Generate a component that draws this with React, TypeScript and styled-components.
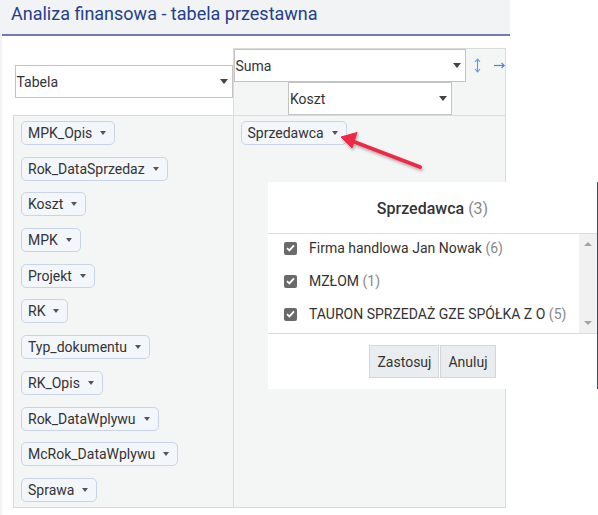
import styled, { createGlobalStyle } from "styled-components";

const GlobalStyle = createGlobalStyle`
  html, body {
    margin: 0;
    padding: 0;
    background: #ffffff;
  }
  body {
    font-family: Roboto, "Liberation Sans", Arial, sans-serif;
    color: #333;
  }
`;

const StyledPage = styled.div`
  position: relative;
  width: 598px;
  height: 515px;
  overflow: hidden;
`;

const StyledWrapper = styled.div`
  width: 510px;
  height: 515px;
  background-color: #f1f3f4;
  display: flex;
  flex-direction: column;
`;

const StyledHeader = styled.header`
  height: 34px;
  padding-left: 11px;
  font-size: 18px;
  line-height: 28px;
  color: #24408a;
`;

const StyledPanel = styled.main`
  flex: 1;
  margin-left: 2px;
  border-top: 2px solid #6c7db4;
  background: #ffffff;
  padding: 12px 0 0 11px;
`;

const StyledTable = styled.table`
  border-collapse: collapse;
  border-spacing: 0;
`;

const StyledRendererCell = styled.td`
  width: 218px;
  padding: 0 0 0 1px;
  vertical-align: middle;
`;

const StyledAxisCell = styled.td<{ $top?: boolean }>`
  border: 1px solid #d9dcdc;
  background: #f4f5f5;
  padding: ${(p) => (p.$top ? "0" : "5px 7px")};
  vertical-align: top;
  text-align: ${(p) => (p.$top ? "center" : "left")};
`;

const StyledSelect = styled.div<{ $width: number }>`
  box-sizing: border-box;
  width: ${(p) => p.$width}px;
  height: 33px;
  border: 1px solid #c3c3c3;
  background: #ffffff;
  display: flex;
  align-items: center;
  justify-content: space-between;
  padding: 0 4px 0 1px;
  font-size: 14px;
  color: #333;
  text-align: left;
`;

const StyledSelectArrow = styled.span`
  width: 0;
  height: 0;
  border-left: 4px solid transparent;
  border-right: 4px solid transparent;
  border-top: 5px solid #444;
`;

const StyledAggRow = styled.div`
  display: flex;
  align-items: center;
`;

const StyledIcon = styled.svg<{ $ml: number }>`
  margin-left: ${(p) => p.$ml}px;
  flex-shrink: 0;
`;

const StyledCenterRow = styled.div`
  display: flex;
  justify-content: center;
  padding-left: 2px;
`;

const StyledAttrList = styled.div`
  display: flex;
  flex-direction: column;
  align-items: flex-start;
  gap: 11.7px;
`;

const StyledPill = styled.div`
  box-sizing: border-box;
  display: inline-flex;
  align-items: center;
  height: 24px;
  padding: 0 8px 0 6px;
  border: 1px solid #c9d5e6;
  border-radius: 5px;
  background: #f3f6fa;
  font-size: 14px;
  color: #333;
  white-space: nowrap;
`;

const StyledCaret = styled.span`
  margin-left: 8px;
  width: 0;
  height: 0;
  border-left: 3px solid transparent;
  border-right: 3px solid transparent;
  border-top: 4px solid #555;
`;

const StyledArrow = styled.svg`
  position: absolute;
  left: 330px;
  top: 120px;
  overflow: visible;
`;

const StyledPopup = styled.div`
  position: absolute;
  left: 268px;
  top: 182px;
  box-sizing: border-box;
  width: 330px;
  height: 207px;
  background: #ffffff;
  border-right: 1px solid #3e4a66;
  display: flex;
  flex-direction: column;
`;

const StyledPopupTitle = styled.div`
  height: 51px;
  box-sizing: border-box;
  padding-top: 15px;
  line-height: 24px;
  text-align: center;
  font-size: 16px;
  font-weight: 500;
  color: #333;
`;

const StyledCount = styled.span`
  font-weight: 400;
  color: #888;
`;

const StyledList = styled.div`
  height: 101px;
  box-sizing: border-box;
  border-top: 1px solid #dcdcdc;
  border-bottom: 1px solid #dcdcdc;
  display: flex;
`;

const StyledItems = styled.div`
  flex: 1;
  padding-left: 16px;
`;

const StyledItem = styled.label`
  height: 33px;
  box-sizing: border-box;
  padding-bottom: 5px;
  display: flex;
  align-items: center;
  gap: 12px;
  font-size: 14px;
  color: #333;
  white-space: nowrap;
`;

const StyledCheck = styled.span`
  width: 13px;
  height: 13px;
  border-radius: 2px;
  background: #6a6a6a;
  display: flex;
  align-items: center;
  justify-content: center;
`;

const StyledScrollbar = styled.div`
  width: 18px;
  background: #f1f1f1;
  display: flex;
  flex-direction: column;
  justify-content: space-between;
  align-items: center;
  padding: 8px 0 8px;
`;

const StyledScrollArrow = styled.span<{ $up?: boolean }>`
  width: 0;
  height: 0;
  border-left: 4px solid transparent;
  border-right: 4px solid transparent;
  ${(p) => (p.$up ? "border-bottom: 4px solid #a3a3a3;" : "border-top: 4px solid #a3a3a3;")}
`;

const StyledButtons = styled.div`
  display: flex;
  justify-content: center;
  gap: 1px;
  padding-top: 11px;
`;

const StyledButton = styled.button`
  height: 33px;
  padding: 0 7px;
  border: 1px solid #d4d6d8;
  background: #eaedf0;
  font-family: inherit;
  font-size: 14px;
  color: #333;
`;

const unused = [
  "MPK_Opis",
  "Rok_DataSprzedaz",
  "Koszt",
  "MPK",
  "Projekt",
  "RK",
  "Typ_dokumentu",
  "RK_Opis",
  "Rok_DataWplywu",
  "McRok_DataWplywu",
  "Sprawa",
];

const sellers = [
  { name: "Firma handlowa Jan Nowak", count: 6 },
  { name: "MZŁOM", count: 1 },
  { name: "TAURON SPRZEDAŻ GZE SPÓŁKA Z O", count: 5 },
];

function Pill({ label }: { label: string }) {
  return (
    <StyledPill>
      {label}
      <StyledCaret />
    </StyledPill>
  );
}

function App() {
  return (
    <StyledPage>
      <GlobalStyle />
      <StyledWrapper>
        <StyledHeader>Analiza finansowa - tabela przestawna</StyledHeader>
        <StyledPanel>
          <StyledTable>
            <tbody>
              <tr>
                <StyledRendererCell>
                  <StyledSelect $width={218}>
                    Tabela
                    <StyledSelectArrow />
                  </StyledSelect>
                </StyledRendererCell>
                <StyledAxisCell $top>
                  <StyledAggRow>
                    <StyledSelect $width={232}>
                      Suma
                      <StyledSelectArrow />
                    </StyledSelect>
                    {/* row order toggle */}
                    <StyledIcon $ml={8} width="7" height="15" viewBox="0 0 7 15">
                      <path d="M3.5 1.5 V13.5" stroke="#5b9ae8" strokeWidth="1.1" />
                      <path d="M1 4 L3.5 1.2 L6 4 M1 11 L3.5 13.8 L6 11" fill="none" stroke="#5b9ae8" strokeWidth="1.1" />
                    </StyledIcon>
                    {/* column order toggle */}
                    <StyledIcon $ml={13} width="11" height="7" viewBox="0 0 11 7">
                      <path d="M0 3.5 H10" stroke="#3d86e4" strokeWidth="1.2" />
                      <path d="M7.5 1 L10.3 3.5 L7.5 6" fill="none" stroke="#3d86e4" strokeWidth="1.1" />
                    </StyledIcon>
                  </StyledAggRow>
                  <StyledCenterRow>
                    <StyledSelect $width={164}>
                      Koszt
                      <StyledSelectArrow />
                    </StyledSelect>
                  </StyledCenterRow>
                </StyledAxisCell>
              </tr>
              <tr>
                <StyledAxisCell>
                  <StyledAttrList>
                    {unused.map((u) => (
                      <Pill key={u} label={u} />
                    ))}
                  </StyledAttrList>
                </StyledAxisCell>
                <StyledAxisCell>
                  <Pill label="Sprzedawca" />
                </StyledAxisCell>
              </tr>
            </tbody>
          </StyledTable>
        </StyledPanel>
      </StyledWrapper>

      <StyledArrow width="100" height="60" viewBox="0 0 100 60">
        <defs>
          <filter id="shadow" x="-20%" y="-40%" width="140%" height="180%">
            <feDropShadow dx="1" dy="2" stdDeviation="1.5" floodColor="#000" floodOpacity="0.3" />
          </filter>
        </defs>
        <g filter="url(#shadow)" fill="#ec2a44" stroke="#ec2a44">
          <line x1="90" y1="47" x2="22" y2="21" strokeWidth="4" strokeLinecap="round" />
          <polygon points="11,17 27,12.5 22,28" strokeWidth="1" strokeLinejoin="round" />
        </g>
      </StyledArrow>

      <StyledPopup>
        <StyledPopupTitle>
          Sprzedawca <StyledCount>(3)</StyledCount>
        </StyledPopupTitle>
        <StyledList>
          <StyledItems>
            {sellers.map((s) => (
              <StyledItem key={s.name}>
                <StyledCheck>
                  <svg width="9" height="8" viewBox="0 0 9 8">
                    <path d="M1 4.2 L3.4 6.4 L8 1.4" fill="none" stroke="#fff" strokeWidth="1.8" />
                  </svg>
                </StyledCheck>
                <span>
                  {s.name} <StyledCount>({s.count})</StyledCount>
                </span>
              </StyledItem>
            ))}
          </StyledItems>
          <StyledScrollbar>
            <StyledScrollArrow $up />
            <StyledScrollArrow />
          </StyledScrollbar>
        </StyledList>
        <StyledButtons>
          <StyledButton>Zastosuj</StyledButton>
          <StyledButton>Anuluj</StyledButton>
        </StyledButtons>
      </StyledPopup>
    </StyledPage>
  );
}

export default App;
